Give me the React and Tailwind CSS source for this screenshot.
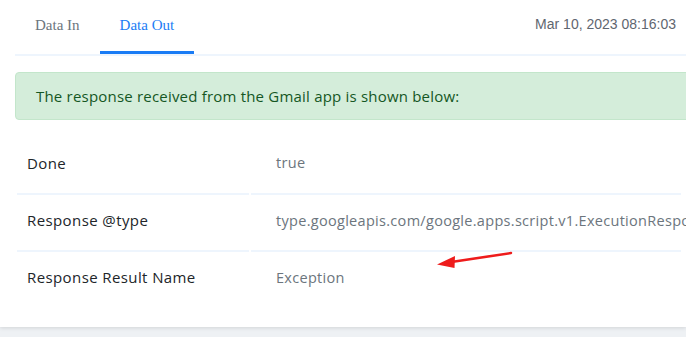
import React from 'react';

const rows = [
  { label: 'Done', value: 'true', h: 'h-[59px] pb-[3px]', border: true },
  { label: 'Response @type', value: 'type.googleapis.com/google.apps.script.v1.ExecutionResponse', h: 'h-[57px] pb-[4px]', border: true },
  { label: 'Response Result Name', value: 'Exception', h: 'h-[55px] pb-[4px]', border: false },
];

const App = () => {
  return (
    <div className="relative w-[686px] h-[337px] overflow-hidden bg-[#eef1f4]">
      <div className="h-[327px] bg-white shadow-[0_1px_4px_rgba(0,0,0,0.12)]">
        {/* Tabs */}
        <div className="flex items-end justify-between ml-[15px] h-[56px] border-b-2 border-[#eef5fd]">
          <div className="flex h-full">
            <button className="px-5 h-full text-[15px] text-[#6c757d] font-['Liberation_Serif',serif] pb-[3px]">
              Data In
            </button>
            <button className="px-5 h-full text-[15px] text-[#1a7cf5] font-['Liberation_Serif',serif] border-b-[3px] border-[#1a7cf5] mb-[-2px]">
              Data Out
            </button>
          </div>
          <div className="self-center pr-[10px] pb-[6px] text-[14px] text-[#5f6670] font-['Liberation_Sans',sans-serif]">
            Mar 10, 2023 08:16:03
          </div>
        </div>

        {/* Alert */}
        <div className="mt-4 ml-[15px] w-[700px] h-[48px] flex items-center px-5 rounded bg-[#d4edda] border border-[#c3e6cb] text-[#155724] text-[15px] tracking-[0.2px] font-['Open_Sans',sans-serif]">
          The response received from the Gmail app is shown below:
        </div>

        {/* Details */}
        <div className="mt-4 ml-[17px] font-['Open_Sans',sans-serif]">
          {rows.map((row) => (
            <div key={row.label} className="flex">
              <div className={`w-[232px] pl-[10px] flex items-center text-[15px] tracking-[0.4px] text-[#212529] ${row.h} ${row.border ? 'border-b-2 border-[#eef5fd]' : ''}`}>
                {row.label}
              </div>
              <div className={`ml-[2px] w-[430px] pl-[25px] flex items-center whitespace-nowrap text-[14.5px] tracking-[0.3px] text-[#6c757d] ${row.h} ${row.border ? 'border-b-2 border-[#eef5fd]' : ''}`}>
                {row.value}
              </div>
            </div>
          ))}
        </div>
      </div>

      {/* Annotation arrow */}
      <svg className="absolute left-0 top-0" width="686" height="337">
        <line x1="511" y1="253" x2="448" y2="262.5" stroke="#ee1c1c" strokeWidth="2.5" strokeLinecap="round" />
        <polygon points="437,264.5 455,256 454.5,268" fill="#ee1c1c" />
      </svg>
    </div>
  );
};

export default App;
